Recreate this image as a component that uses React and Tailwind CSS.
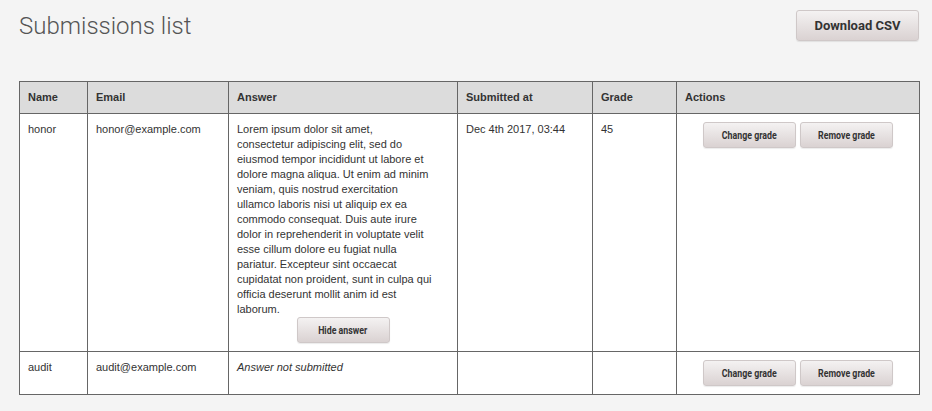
import React from "react";

const lorem =
  "Lorem ipsum dolor sit amet, consectetur adipiscing elit, sed do eiusmod tempor incididunt ut labore et dolore magna aliqua. Ut enim ad minim veniam, quis nostrud exercitation ullamco laboris nisi ut aliquip ex ea commodo consequat. Duis aute irure dolor in reprehenderit in voluptate velit esse cillum dolore eu fugiat nulla pariatur. Excepteur sint occaecat cupidatat non proident, sunt in culpa qui officia deserunt mollit anim id est laborum.";

function SmallBtn({ children }) {
  return (
    <button className="flex h-[26px] w-[93px] items-center justify-center rounded-[3px] border border-[#cfc8c8] bg-gradient-to-b from-[#f4f2f2] to-[#dad2d2] text-[11px] font-bold text-[#333] [font-family:Roboto,sans-serif] shadow-[0_1px_1px_rgba(0,0,0,0.08)]">
      <span className="inline-block scale-x-[0.8] whitespace-nowrap">{children}</span>
    </button>
  );
}

const td = "border border-[#666] px-2 py-2 align-top";
const th = "border border-[#666] px-2 py-2 text-left font-bold";

export default function App() {
  return (
    <div className="min-h-[411px] bg-[#f4f4f4] text-[#333] [font-family:'Liberation_Sans',Arial,sans-serif]">
      <div className="ml-[19px] w-[900px] pt-[10px]">
        <div className="flex items-start justify-between">
          <h1 className="mt-[2px] text-[24px] font-light leading-[29px] text-[#555] [font-family:Roboto,sans-serif]">
            Submissions list
          </h1>
          <button className="h-[31px] w-[123px] rounded-[3px] border border-[#cfc8c8] bg-gradient-to-b from-[#f4f2f2] to-[#dad2d2] text-[13px] font-bold text-[#333] [font-family:Roboto,sans-serif] shadow-[0_1px_1px_rgba(0,0,0,0.08)]">
            Download CSV
          </button>
        </div>
        <table className="mt-[40px] w-[900px] table-fixed border-collapse text-[11px] leading-[15px]">
          <colgroup>
            <col className="w-[68px]" />
            <col className="w-[141px]" />
            <col className="w-[229px]" />
            <col className="w-[135px]" />
            <col className="w-[84px]" />
            <col className="w-[243px]" />
          </colgroup>
          <thead>
            <tr className="bg-[#dcdcdc]">
              <th className={th}>Name</th>
              <th className={th}>Email</th>
              <th className={th}>Answer</th>
              <th className={th}>Submitted at</th>
              <th className={th}>Grade</th>
              <th className={th}>Actions</th>
            </tr>
          </thead>
          <tbody className="bg-white">
            <tr>
              <td className={td}>honor</td>
              <td className={td}>honor@example.com</td>
              <td className={td}>
                <div className="w-[195px]">{lorem}</div>
                <div className="flex justify-center">
                  <SmallBtn>Hide answer</SmallBtn>
                </div>
              </td>
              <td className={td}>Dec 4th 2017, 03:44</td>
              <td className={td}>45</td>
              <td className={td}>
                <div className="flex justify-center gap-[4px]">
                  <SmallBtn>Change grade</SmallBtn>
                  <SmallBtn>Remove grade</SmallBtn>
                </div>
              </td>
            </tr>
            <tr>
              <td className={td}>audit</td>
              <td className={td}>audit@example.com</td>
              <td className={td}>
                <i>Answer not submitted</i>
              </td>
              <td className={td}></td>
              <td className={td}></td>
              <td className={td}>
                <div className="flex justify-center gap-[4px]">
                  <SmallBtn>Change grade</SmallBtn>
                  <SmallBtn>Remove grade</SmallBtn>
                </div>
              </td>
            </tr>
          </tbody>
        </table>
      </div>
    </div>
  );
}
